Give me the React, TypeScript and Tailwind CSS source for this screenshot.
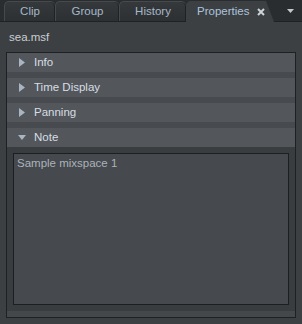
import React from "react";

const RightTri = () => (
  <svg width="6" height="9" viewBox="0 0 6 9" className="shrink-0">
    <polygon points="0,0 6,4.5 0,9" fill="#a9b5c1" />
  </svg>
);
const DownTri = () => (
  <svg width="8" height="5" viewBox="0 0 8 5" className="shrink-0">
    <polygon points="0,0 8,0 4,5" fill="#a9b5c1" />
  </svg>
);

const Row = ({ label, open }: { label: string; open?: boolean }) => (
  <div className="h-[19px] bg-[#53575b] flex items-center">
    <div className="w-[27px] flex justify-center pl-[2px]">{open ? <DownTri /> : <RightTri />}</div>
    <span className="text-[#d6dde5]">{label}</span>
  </div>
);

const Tab = ({ label, w }: { label: string; w: string }) => (
  <div
    className={`${w} h-[20px] flex items-center justify-center pt-[1px] rounded-tl-[5px] rounded-tr-[5px] border-t border-l border-[#474a4d] bg-gradient-to-b from-[#36393c] to-[#2d3033] text-[#a6b8ca] shadow-[inset_-1px_0_0_#1f2224]`}
  >
    {label}
  </div>
);

export default function App() {
  return (
    <div
      className="w-[302px] h-[324px] bg-[#2a2d30] flex flex-col text-[11.5px] overflow-hidden"
      style={{ fontFamily: '"Liberation Sans", Arial, sans-serif' }}
    >
      <div className="h-[22px] flex items-end pl-[4px] relative border-b border-[#1f2224]">
        <Tab label="Clip" w="w-[51px]" />
        <Tab label="Group" w="w-[64px]" />
        <Tab label="History" w="w-[67px]" />
        <div className="w-[88px] h-[21px] -mb-px bg-[#3d4043] flex items-center pl-[11px] pt-[1px] gap-[8px] text-[#acc4dc] [clip-path:polygon(0_0,80px_0,88px_100%,0_100%)] rounded-tl-[5px]">
          <span>Properties</span>
          <svg width="8" height="8" viewBox="0 0 8 8">
            <path d="M1 1 L7 7 M7 1 L1 7" stroke="#ccd3da" strokeWidth="2" />
          </svg>
        </div>
        <div className="flex-1 flex justify-end items-center h-full pr-[8px]">
          <svg width="7" height="4" viewBox="0 0 7 4">
            <polygon points="0,0 7,0 3.5,4" fill="#c4c9ce" />
          </svg>
        </div>
      </div>
      <div className="flex-1 bg-[#3d4043] flex flex-col">
        <div className="h-[30px] flex items-center pl-[9px] pt-[1px] text-[#c9ced3]">sea.msf</div>
        <div className="ml-[6px] w-[290px] h-[266px] border border-[#1e2124] bg-[#3a3d40] flex flex-col">
          <div className="flex flex-col gap-[6px] bg-[#474a4e]">
            <Row label="Info" />
            <Row label="Time Display" />
            <Row label="Panning" />
            <Row label="Note" open />
          </div>
          <div className="h-[6px]" />
          <div className="ml-[6px] w-[276px] h-[152px] border border-[#1c1f22] bg-[#46494d] px-[3px] pt-[1px] text-[#aab3bc]">
            Sample mixspace 1
          </div>
          <div className="h-[6px]" />
          <div className="flex-1 bg-[#45484b]" />
        </div>
      </div>
    </div>
  );
}
